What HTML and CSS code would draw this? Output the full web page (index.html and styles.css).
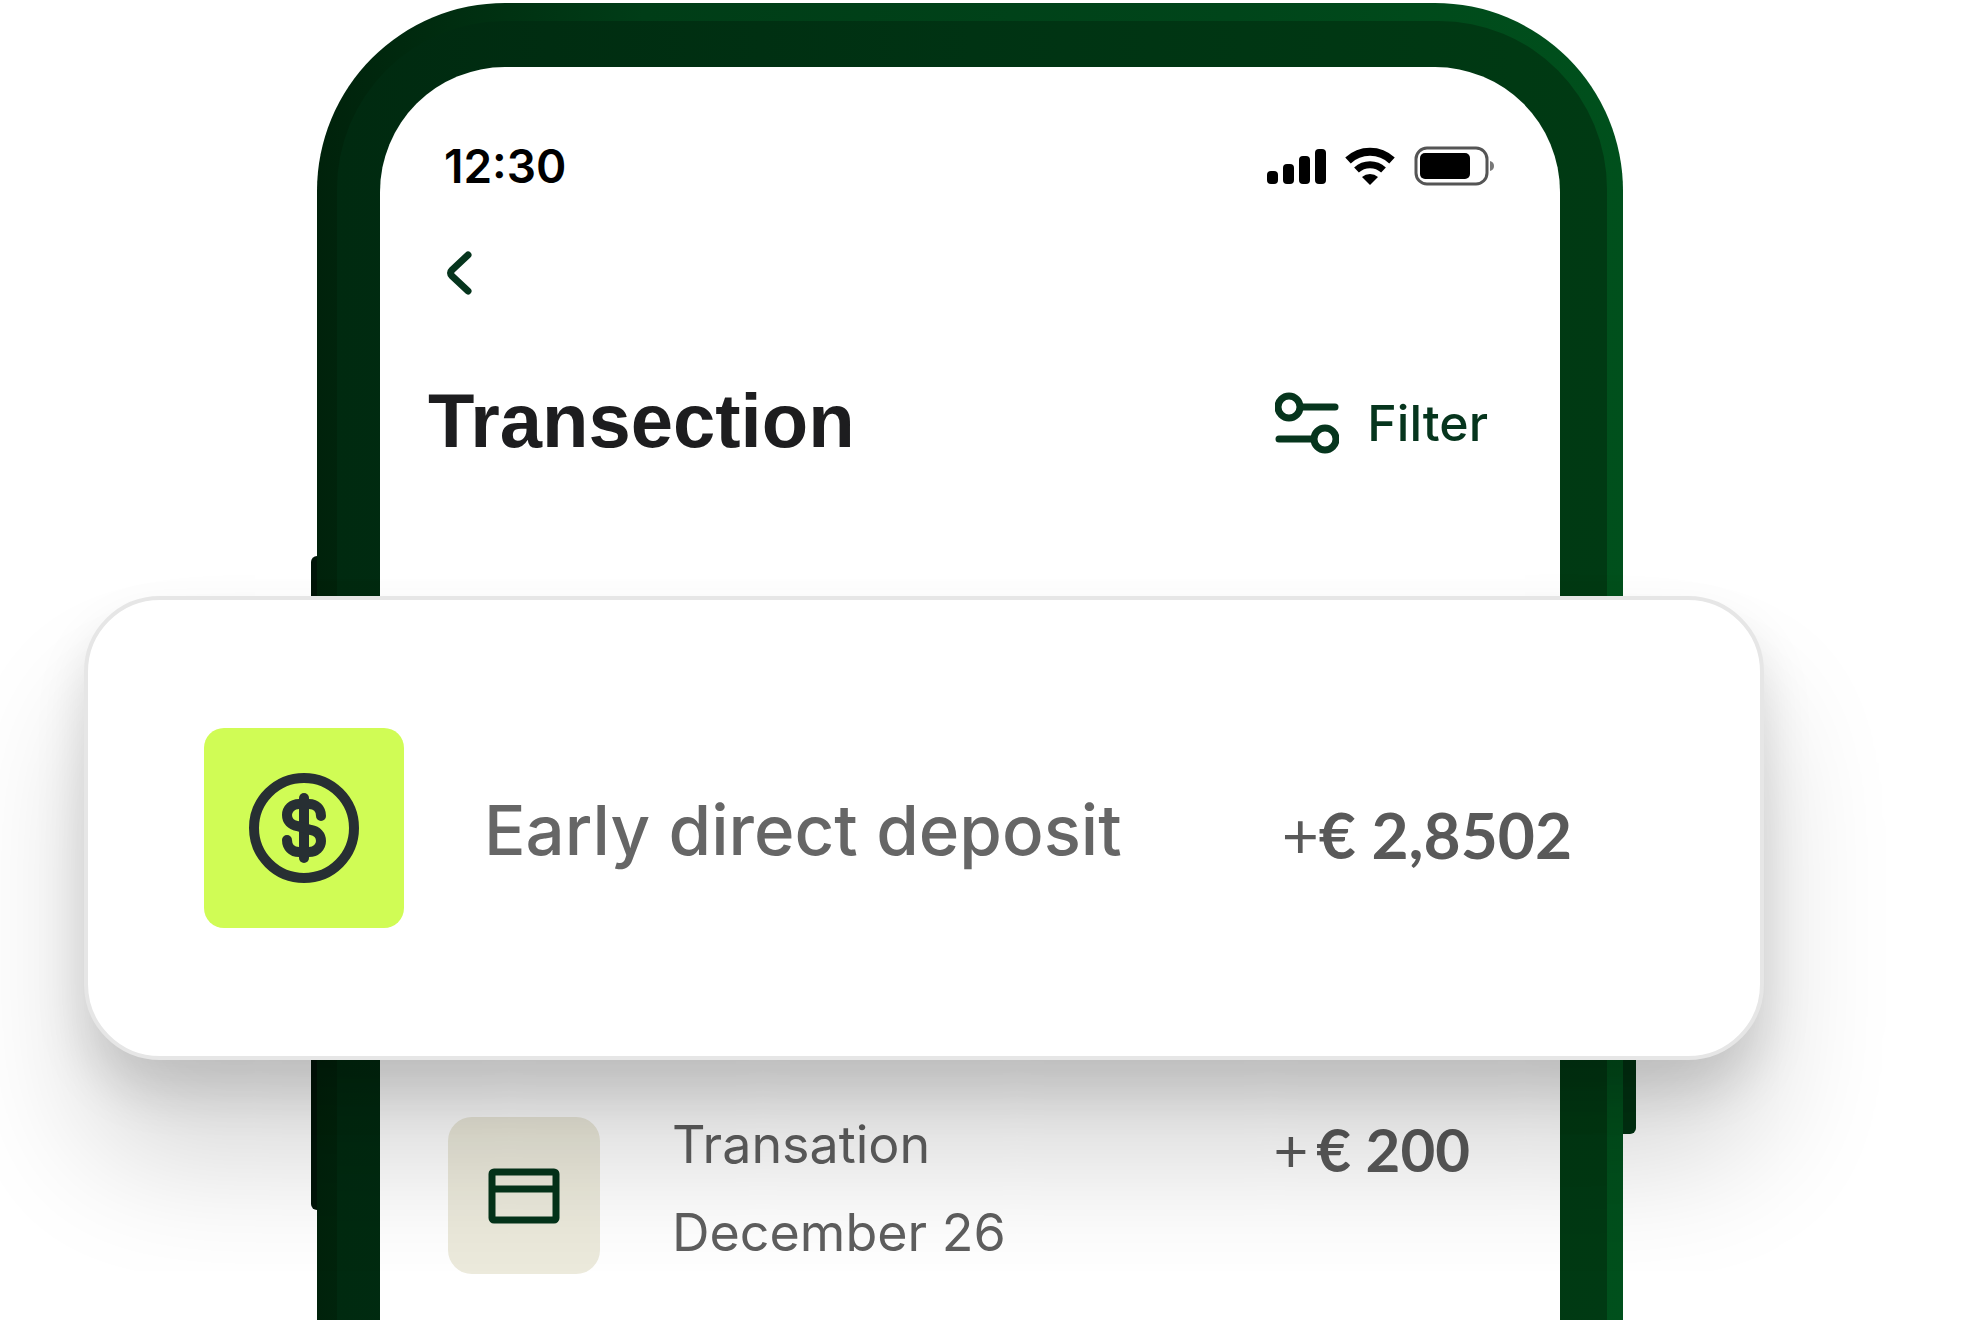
FILE: index.html
```html
<!DOCTYPE html>
<html lang="en">
<head>
  <meta charset="UTF-8">
  <meta name="viewport" content="width=device-width, initial-scale=1">
  <title>Transection</title>
  <link rel="stylesheet" href="styles.css">
</head>
<body>
  <main class="scene">
    <section class="phone">
      <span class="side-button mute"></span>
      <span class="side-button volume"></span>
      <span class="side-button power"></span>

      <div class="bezel">
        <div class="screen">
          <div class="status-bar">
            <span class="time">12:30</span>
            <div class="status-icons">
              <svg width="60" height="40" viewBox="0 0 60 40" aria-hidden="true">
                <rect x="1" y="25" width="11" height="13" rx="4"/>
                <rect x="17" y="18" width="11" height="20" rx="4"/>
                <rect x="33" y="10" width="11" height="28" rx="4"/>
                <rect x="49" y="3" width="11" height="35" rx="4"/>
              </svg>
              <svg width="50" height="40" viewBox="0 0 50 40" aria-hidden="true">
                <path d="M3 14.500A32 32 0 0 1 47 14.500" fill="none" stroke="#000" stroke-width="8"/>
                <path d="M11.500 24A20 20 0 0 1 38.500 24" fill="none" stroke="#000" stroke-width="7"/>
                <path d="M17 31a12 12 0 0 1 16 0l-8 8z"/>
              </svg>
              <svg width="80" height="40" viewBox="0 0 80 40" aria-hidden="true">
                <rect x="2" y="2" width="71" height="36" rx="11" fill="none" stroke="#555" stroke-width="3"/>
                <rect x="6" y="7" width="50" height="26" rx="5"/>
                <path d="M76 15q4 1 4 5t-4 5z" fill="#777"/>
              </svg>
            </div>
          </div>

          <button class="back" type="button" aria-label="Back">
            <svg width="28" height="44" viewBox="0 0 28 44" aria-hidden="true">
              <path d="M22 4L6 19q-3 3 0 6L22 40" fill="none" stroke="currentColor" stroke-width="7" stroke-linecap="round" stroke-linejoin="round"/>
            </svg>
          </button>

          <header class="title-row">
            <h1>Transection</h1>
            <button class="filter" type="button">
              <svg width="64" height="62" viewBox="0 0 64 62" fill="none" stroke="currentColor" stroke-width="7" stroke-linecap="round" aria-hidden="true">
                <circle cx="14" cy="15" r="11"/>
                <path d="M26 15h34"/>
                <circle cx="50" cy="47" r="11"/>
                <path d="M4 47h34"/>
              </svg>
              Filter
            </button>
          </header>

          <article class="row">
            <div class="row-icon">
              <svg width="72" height="56" viewBox="0 0 72 56" fill="none" stroke="#04341a" stroke-width="7" aria-hidden="true">
                <rect x="4" y="4" width="64" height="48" rx="2"/>
                <path d="M4 21h64"/>
              </svg>
            </div>
            <div class="row-text">
              <p>Transation</p>
              <p>December 26</p>
            </div>
            <div class="row-amount"><span class="plus">+</span>€ 200</div>
          </article>
        </div>
      </div>
    </section>

    <article class="card">
      <div class="card-icon">
        <svg width="110" height="110" viewBox="0 0 110 110" fill="none" stroke="#272f33" stroke-width="10" stroke-linecap="round" aria-hidden="true">
          <circle cx="55" cy="55" r="50"/>
          <path d="M55 25v60"/>
          <path d="M72 43c0-7-5-12-12-12H50c-7 0-12 5-12 11s4 10 10 11l14 4c6 1 10 5 10 11s-5 11-12 11H50c-7 0-12-5-12-12"/>
        </svg>
      </div>
      <p class="card-label">Early direct deposit</p>
      <div class="card-amount"><span class="plus">+</span>€ 2,8502</div>
    </article>
  </main>
</body>
</html>
```

FILE: styles.css
```css
* {
  box-sizing: border-box;
}

body {
  margin: 0;
  background: #fff;
  font-family: Inter, "Liberation Sans", sans-serif;
  color: #5f5f5f;
}

h1, p {
  margin: 0;
}

button {
  padding: 0;
  border: none;
  background: none;
  font-family: inherit;
  color: #06351d;
  cursor: pointer;
}

svg {
  display: block;
  flex: none;
}

/* phone and card share one grid cell, the card lies over the phone */
.scene {
  display: grid;
  height: 100vh;
  overflow: hidden;
}

.phone, .card {
  grid-area: 1 / 1;
}

.phone {
  position: relative;
  margin: 3px 341px 0 317px;
  padding: 18px 16px 0 20px;
  border-radius: 188px 188px 0 0;
  background: linear-gradient(90deg, #00220b, #003d17 25%, #00451a 70%, #00501c);
}

.bezel {
  height: 100%;
  padding: 46px 47px 0 43px;
  border-radius: 168px 168px 0 0;
  background: linear-gradient(90deg, #002a10, #003313 50%, #003a13);
}

.screen {
  height: 100%;
  padding: 56px 66px 0 48px;
  border-radius: 125px 125px 0 0;
  background: #fff;
}

.side-button {
  position: absolute;
  z-index: -1;
  width: 20px;
  border-radius: 6px;
  background: #001508;
}

.mute {
  left: -6px;
  top: 553px;
  height: 120px;
}

.volume {
  left: -6px;
  top: 960px;
  height: 247px;
}

.power {
  right: -13px;
  top: 900px;
  height: 231px;
  background: #003312;
}

/* status bar */
.status-bar {
  display: flex;
  justify-content: space-between;
  align-items: center;
  padding-left: 16px;
  height: 86px;
}

.time {
  font-size: 46px;
  font-weight: 600;
  color: #000;
}

.status-icons {
  display: flex;
  gap: 19px;
}

.back {
  display: block;
  margin: 42px 0 0 18px;
}

/* title */
.title-row {
  display: flex;
  justify-content: space-between;
  align-items: center;
  margin-top: 80px;
  padding-right: 6px;
  height: 96px;
}

h1 {
  padding-bottom: 6px;
  font-family: "Liberation Sans", Arial, sans-serif;
  font-size: 76px;
  font-weight: 700;
  color: #1d1d1f;
}

.filter {
  display: flex;
  align-items: center;
  gap: 28px;
  font-size: 50px;
  font-weight: 500;
}

/* transaction row */
.row {
  display: flex;
  align-items: flex-start;
  margin-top: 630px;
  padding: 0 24px 0 20px;
}

.row-icon {
  display: flex;
  justify-content: center;
  align-items: center;
  margin-top: 16px;
  width: 152px;
  height: 157px;
  border-radius: 24px;
  background: #eceadc;
}

.row-text {
  flex: 1;
  margin-left: 72px;
  font-size: 52px;
  line-height: 88px;
}

.row-amount, .card-amount {
  display: flex;
  font-family: Lato, sans-serif;
  font-weight: 700;
  color: #595959;
  white-space: pre;
}

.row-amount {
  font-size: 60px;
  line-height: 96px;
}

.plus {
  font-weight: 400;
}

.row-amount .plus {
  margin-right: 8px;
}

/* floating card */
.card {
  position: relative;
  align-self: start;
  display: flex;
  align-items: center;
  margin: 596px 200px 0 84px;
  padding: 128px 188px 128px 116px;
  border: 4px solid #e6e6e6;
  border-radius: 76px;
  background: #fff;
  box-shadow: 0 30px 50px rgba(0, 0, 0, 0.13), 0 100px 130px rgba(0, 0, 0, 0.16);
}

.card-icon {
  display: flex;
  justify-content: center;
  align-items: center;
  width: 200px;
  height: 200px;
  border-radius: 20px;
  background: #d0fc55;
}

.card-label {
  flex: 1;
  margin-left: 80px;
  padding-top: 4px;
  font-size: 69px;
  font-weight: 500;
  color: #666;
}

.card-amount {
  padding-top: 12px;
  font-size: 64px;
}
```
